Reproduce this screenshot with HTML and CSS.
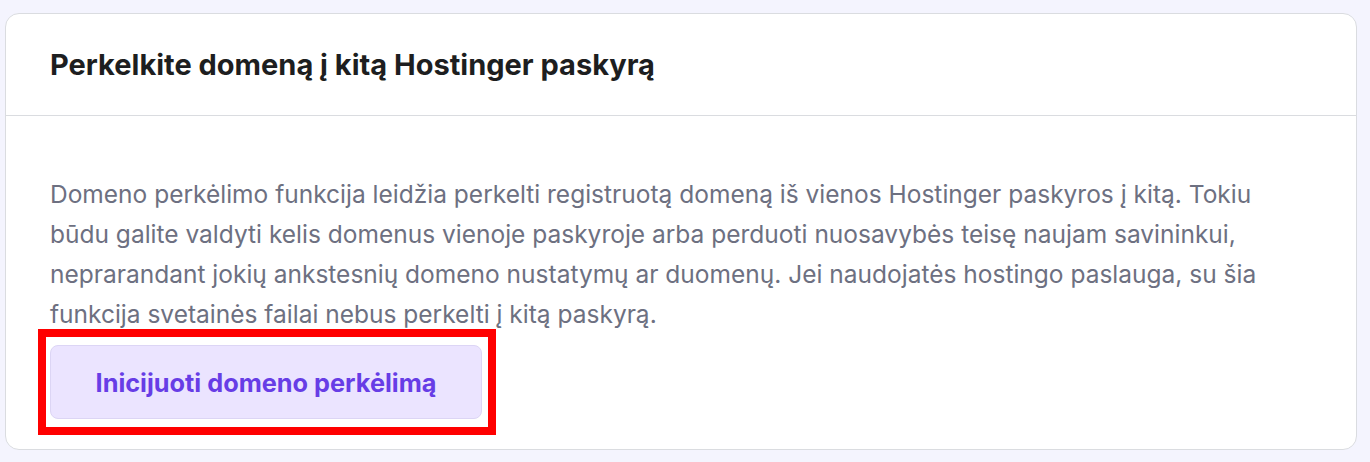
FILE: index.html
```html
<!DOCTYPE html>
<html lang="lt">
<head>
    <meta charset="UTF-8">
    <title>Domeno perkėlimas</title>
    <link rel="stylesheet" href="styles.css">
</head>
<body>
<div class="card">
    <div class="card_head">
        <h2 class="card_title">Perkelkite domeną į kitą Hostinger paskyrą</h2>
    </div>
    <div class="card_body">
        <p class="card_text">Domeno perkėlimo funkcija leidžia perkelti registruotą domeną iš vienos Hostinger paskyros į kitą. Tokiu būdu galite valdyti kelis domenus vienoje paskyroje arba perduoti nuosavybės teisę naujam savininkui, neprarandant jokių ankstesnių domeno nustatymų ar duomenų. Jei naudojatės hostingo paslauga, su šia funkcija svetainės failai nebus perkelti į kitą paskyrą.</p>
        <div class="btn_wrap">
            <button class="btn">Inicijuoti domeno perkėlimą</button>
            <span class="mark"></span>
        </div>
    </div>
</div>
</body>
</html>
```
FILE: styles.css
```css
*{
    padding: 0;
    margin: 0;
    box-sizing: border-box;
}
body{
    background-color: #f4f4fe;
    font-family: Inter, "Noto Sans", sans-serif;
    padding: 13px 13px 0 5px;
}
.card{
    background-color: #fff;
    border: 1px solid #dadce0;
    border-radius: 14px;
    height: 437px;
}
.card_head{
    height: 102px;
    padding: 0 44px;
    display: flex;
    align-items: center;
    border-bottom: 1px solid #dadce0;
}
.card_title{
    font-size: 29px;
    font-weight: 700;
    color: #1d1e20;
}
.card_body{
    padding: 58px 44px 28px;
}
.card_text{
    font-size: 24.5px;
    line-height: 40px;
    color: #6d7081;
    max-width: 1270px;
}
.btn_wrap{
    position: relative;
    display: inline-block;
    margin-top: 11px;
}
.btn{
    display: block;
    width: 432px;
    height: 74px;
    border: 1px solid #dcd5f5;
    border-radius: 8px;
    background-color: #ebe4ff;
    color: #673de6;
    font-family: Inter, "Noto Sans", sans-serif;
    font-size: 25.3px;
    font-weight: 700;
    cursor: pointer;
}
.mark{
    position: absolute;
    left: -12px;
    top: -16px;
    right: -14px;
    bottom: -16px;
    border: 8px solid #f00;
    pointer-events: none;
}
```
